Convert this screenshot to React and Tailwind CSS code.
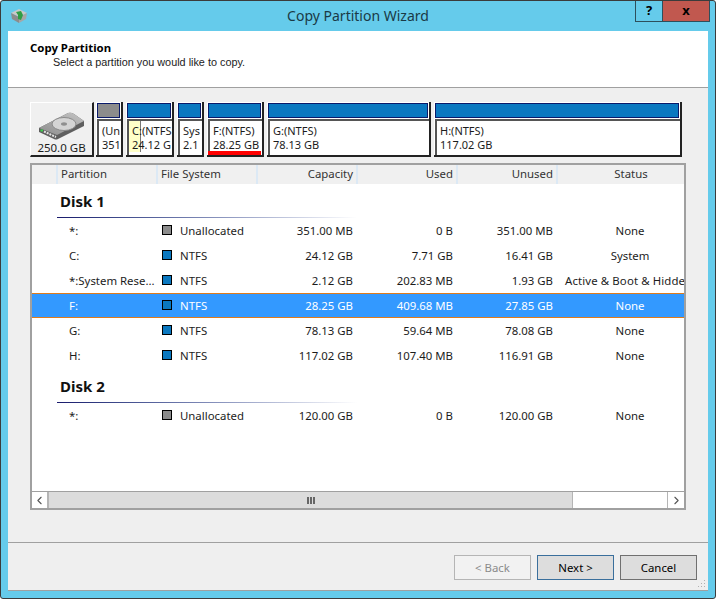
import React from "react";
import { ChevronLeft, ChevronRight } from "lucide-react";

const diskMap = [
  { w: "w-[27px]", color: "bg-[#8c8c8c]", lines: ["(Un", "351"] },
  { w: "w-[48px]", color: "bg-[#0a78c0]", lines: ["C:(NTFS", "24.12 G"], used: true },
  { w: "w-[27px]", color: "bg-[#0a78c0]", lines: ["Sys", "2.1"] },
  { w: "w-[57px]", color: "bg-[#0a78c0]", lines: ["F:(NTFS)", "28.25 GB"], active: true },
  { w: "w-[164px]", color: "bg-[#0a78c0]", lines: ["G:(NTFS)", "78.13 GB"] },
  { w: "w-[248px]", color: "bg-[#0a78c0]", lines: ["H:(NTFS)", "117.02 GB"] },
];

const disk1 = [
  ["*:", "Unallocated", "351.00 MB", "0 B", "351.00 MB", "None", true],
  ["C:", "NTFS", "24.12 GB", "7.71 GB", "16.41 GB", "System"],
  ["*:System Rese...", "NTFS", "2.12 GB", "202.83 MB", "1.93 GB", "Active & Boot & Hidde"],
  ["F:", "NTFS", "28.25 GB", "409.68 MB", "27.85 GB", "None", false, true],
  ["G:", "NTFS", "78.13 GB", "59.64 MB", "78.08 GB", "None"],
  ["H:", "NTFS", "117.02 GB", "107.40 MB", "116.91 GB", "None"],
];

const Row = ({ row }) => {
  const [name, fs, cap, used, unused, status, gray, selected] = row;
  return (
    <div
      className={`flex h-[25px] w-full items-center overflow-hidden ${
        selected ? "bg-[#3399ff] text-white shadow-[inset_0_1px_0_#e07b1a,inset_0_-1px_0_#e07b1a]" : ""
      }`}
    >
      <div className="w-[130px] shrink-0 pl-[37px] whitespace-nowrap">{name}</div>
      <div className="flex w-[100px] shrink-0 items-center gap-[8px]">
        <span className={`h-[10px] w-[10px] border border-black ${gray ? "bg-[#8c8c8c]" : "bg-[#0a78c0]"}`} />
        <span>{fs}</span>
      </div>
      <div className="w-[91px] shrink-0 text-right">{cap}</div>
      <div className="w-[100px] shrink-0 text-right">{used}</div>
      <div className="w-[100px] shrink-0 text-right">{unused}</div>
      <div
        className={`shrink-0 whitespace-nowrap ${
          status.startsWith("Active") ? "w-[131px] pl-[12px] tracking-[0.12px]" : "w-[154px] text-center"
        }`}
      >
        {status}
      </div>
    </div>
  );
};

const DiskHeading = ({ label }) => (
  <div className="flex h-[33px] flex-col justify-end">
    <div className="pl-[28px] text-[15px] leading-[20px] font-bold text-[#111]">{label}</div>
    <div className="mt-[6px] ml-[25px] h-px w-[300px] bg-gradient-to-r from-[#1a1a6c] to-white" />
  </div>
);

const HeaderCell = ({ w, right, children }) => (
  <div
    className={`h-full shrink-0 border-r-2 border-[#dce9f5] leading-[18px] ${w} ${
      right ? "pr-[3px] text-right" : "pl-[3px]"
    }`}
  >
    {children}
  </div>
);

const WinButton = ({ children, disabled, focus }) => (
  <button
    className={`h-[25px] w-[77px] border ${
      disabled
        ? "border-[#b5b5b5] bg-[#f2f2f2] text-[#8a8a8a]"
        : focus
          ? "border-[#3a6f9c] bg-[#dddddd] text-black"
          : "border-[#707070] bg-[#dddddd] text-black"
    }`}
  >
    {children}
  </button>
);

const DriveIcon = () => (
  <svg width="47" height="28" viewBox="0 0 47 28">
    <defs>
      <linearGradient id="plate" x1="0" y1="1" x2="1" y2="0">
        <stop offset="0" stopColor="#8d8d8d" />
        <stop offset="1" stopColor="#c4c4c4" />
      </linearGradient>
    </defs>
    <path d="M1 16 L30 1 Q33 0 36 2 L46 9 L46 14 L20 27 Q18 28 16 27 L1 20 Z" fill="#5f5f5f" />
    <path d="M1 16 L30 1 Q33 0 36 2 L46 9 L19 23 Z" fill="url(#plate)" />
    <ellipse cx="26" cy="12" rx="12" ry="6.5" fill="#d4d4d4" stroke="#8a8a8a" />
    <ellipse cx="26" cy="12" rx="3" ry="1.7" fill="#8f8f8f" />
    <path d="M6 19.5 L18 25" stroke="#e4e4e4" strokeWidth="2" strokeDasharray="2 1" />
    <rect x="2.5" y="17.5" width="2.5" height="2" fill="#3fcf4f" />
  </svg>
);

const AppIcon = () => (
  <svg width="18" height="16" viewBox="0 0 18 16">
    <path d="M1 5 L9 1 L17 5 L9 9 Z" fill="#c9c9c9" />
    <path d="M1 5 L9 9 L9 15 L2 11 Z" fill="#8c8c8c" />
    <path d="M17 5 L9 9 L9 15 L16 11 Z" fill="#a6a6a6" />
    <path d="M6 4 L11 3 L13 7 L11 12 L8 11 L8 7 Z" fill="#2f9e44" />
  </svg>
);

const Grip = () => (
  <svg className="absolute right-[2px] bottom-[2px]" width="8" height="8" viewBox="0 0 8 8" fill="#b0b0b0">
    <rect x="6" y="0" width="1" height="1" />
    <rect x="3" y="3" width="1" height="1" />
    <rect x="6" y="3" width="1" height="1" />
    <rect x="0" y="6" width="1" height="1" />
    <rect x="3" y="6" width="1" height="1" />
    <rect x="6" y="6" width="1" height="1" />
  </svg>
);

export default function App() {
  return (
    <div className="flex h-[599px] w-[716px] flex-col overflow-hidden rounded-[3px] border border-[#3b3b3b] bg-[#65cbeb] font-['Noto_Sans',sans-serif] text-[11.4px] text-[#1c1c1c]">
      {/* title bar */}
      <div className="relative flex h-[30px] shrink-0 items-center justify-center pb-[2px]">
        <div className="absolute top-[7px] left-[9px]">
          <AppIcon />
        </div>
        <span className="text-[14px] text-[#1a3a46]">Copy Partition Wizard</span>
        <div className="absolute top-[-1px] right-[5px] flex h-[22px]">
          <div className="flex w-[28px] items-center justify-center border border-[#2d4f5c] text-[13px] font-bold text-black">?</div>
          <div className="flex w-[47px] items-center justify-center border border-l-0 border-[#2d4f5c] bg-[#c1584f] text-[13px] font-bold text-black">x</div>
        </div>
      </div>

      <div className="mr-[7px] ml-[7px] flex flex-1 flex-col border-b border-[#a0a0a0] bg-[#efefef]">
        {/* header */}
        <div className="h-[57px] shrink-0 border-b border-[#a0a0a0] bg-white pt-[9px] pl-[22px]">
          <div className="leading-[15px] font-bold text-black">Copy Partition</div>
          <div className="pl-[23px] font-['Liberation_Sans',sans-serif] text-[10.85px] leading-[14px]">Select a partition you would like to copy.</div>
        </div>

        {/* disk map */}
        <div className="mt-[14px] ml-[22px] flex h-[55px] items-stretch gap-[3px]">
          <div className="mr-[-1px] flex w-[64px] flex-col items-center border-t border-l border-white border-r-2 border-b-2 border-r-[#222] border-b-[#222] bg-[#f0f0f0] pt-[9px]">
            <DriveIcon />
            <span className="mt-[1px] text-[11.5px] leading-[14px]">250.0 GB</span>
          </div>
          {diskMap.map((p, i) => (
            <div key={i} className={`${p.w} relative flex shrink-0 flex-col overflow-hidden border-r-2 border-b-2 border-r-[#222] border-b-[#222] bg-white pt-[1px] pl-[1px]`}>
              <div className={`mr-[1px] h-[15px] shrink-0 border border-[#0a1a6a] ${p.color}`} />
              <div className="relative mt-[1px] flex-1 overflow-hidden border-t-2 border-l-2 border-t-[#555] border-l-[#555] pt-[3px] pl-[3px] text-[11px] leading-[14px] whitespace-nowrap">
                {p.used && <div className="absolute top-0 bottom-[3px] left-0 w-[12px] border-r border-[#777] bg-[#ffffc8]" />}
                <div className="relative">{p.lines[0]}</div>
                <div className="relative">{p.lines[1]}</div>
              </div>
              {p.active && <div className="absolute right-[1px] bottom-0 left-[1px] h-[4px] bg-[#ff0000]" />}
            </div>
          ))}
        </div>

        {/* list */}
        <div className="mt-[6px] ml-[22px] flex h-[347px] w-[656px] flex-col border-2 border-[#a0a0a0] bg-white">
          <div className="flex h-[19px] shrink-0 overflow-hidden bg-[#f0f0f0] text-[#333]">
            <HeaderCell w="w-[26px]" />
            <HeaderCell w="w-[100px]">Partition</HeaderCell>
            <HeaderCell w="w-[100px]">File System</HeaderCell>
            <HeaderCell w="w-[100px]" right>Capacity</HeaderCell>
            <HeaderCell w="w-[100px]" right>Used</HeaderCell>
            <HeaderCell w="w-[100px]" right>Unused</HeaderCell>
            <div className="h-full w-[146px] shrink-0 text-center leading-[18px]">Status</div>
          </div>
          <div className="flex-1 overflow-hidden pt-[1px]">
            <DiskHeading label="Disk 1" />
            {disk1.map((row, i) => (
              <Row key={i} row={row} />
            ))}
            <div className="h-[2px]" />
            <DiskHeading label="Disk 2" />
            <Row row={["*:", "Unallocated", "120.00 GB", "0 B", "120.00 GB", "None", true]} />
          </div>
          {/* scrollbar */}
          <div className="flex h-[17px] shrink-0 border-t border-[#a0a0a0]">
            <div className="flex w-[17px] items-center justify-center border-r-2 border-[#b5b5b5] bg-white text-[#555]">
              <ChevronLeft size={13} />
            </div>
            <div className="flex w-[523px] items-center justify-center gap-[1px] bg-[#dcdcdc]">
              <span className="h-[7px] w-[2px] bg-[#666]" />
              <span className="h-[7px] w-[2px] bg-[#666]" />
              <span className="h-[7px] w-[2px] bg-[#666]" />
            </div>
            <div className="flex-1 border-l border-[#b5b5b5] bg-white" />
            <div className="flex w-[17px] items-center justify-center border-l border-[#b5b5b5] bg-white text-[#555]">
              <ChevronRight size={13} />
            </div>
          </div>
        </div>

        {/* footer */}
        <div className="relative mt-[32px] flex flex-1 justify-end gap-[6px] border-t border-[#a0a0a0] pt-[12px] pr-[11px]">
          <WinButton disabled>&lt; Back</WinButton>
          <WinButton focus>Next &gt;</WinButton>
          <WinButton>Cancel</WinButton>
          <Grip />
        </div>
      </div>
      <div className="h-[7px] shrink-0" />
    </div>
  );
}
